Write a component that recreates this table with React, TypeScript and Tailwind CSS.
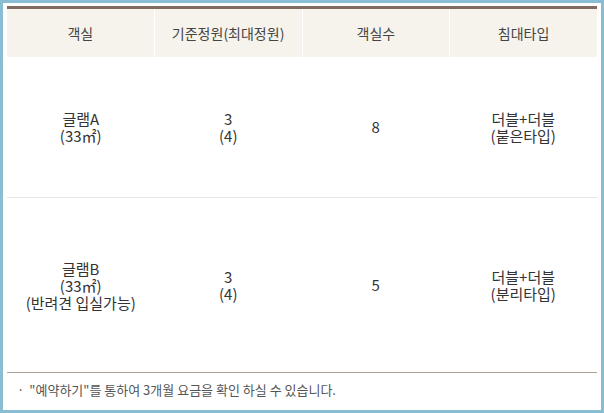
const rows = [
  { room: ['글램A', '(33㎡)'], people: ['3', '(4)'], count: '8', bed: ['더블+더블', '(붙은타입)'], h: 'h-[141px] border-b border-[#e6e6e6]' },
  { room: ['글램B', '(33㎡)', '(반려견 입실가능)'], people: ['3', '(4)'], count: '5', bed: ['더블+더블', '(분리타입)'], h: 'h-[174px]' },
];

const heads = ['객실', '기준정원(최대정원)', '객실수', '침대타입'];

const Lines = ({ items }: { items: string[] }) => (
  <div className="flex flex-col items-center">
    {items.map((t) => (
      <span key={t} className="leading-[17px]">
        {t}
      </span>
    ))}
  </div>
);

const App = () => {
  return (
    <div className="w-[604px] h-[413px] bg-[#89bdd3] p-[3px] font-['Noto_Sans_CJK_KR','Noto_Sans',sans-serif]">
      <div className="h-full bg-white pt-[3px] px-[4px] flex flex-col">
        <div className="border-t-[3px] border-[#7f6b5f]">
          <div className="grid grid-cols-4 gap-x-px h-[48px] bg-white">
            {heads.map((h) => (
              <div key={h} className="bg-[#f6f3ec] flex items-center justify-center text-[14px] text-[#444]">
                {h}
              </div>
            ))}
          </div>
          {rows.map((r) => (
            <div key={r.count} className={`grid grid-cols-4 items-center text-[15px] text-[#333] ${r.h}`}>
              <Lines items={r.room} />
              <Lines items={r.people} />
              <div className="text-center">{r.count}</div>
              <Lines items={r.bed} />
            </div>
          ))}
        </div>
        <div className="border-t border-[#aaa19b] flex items-center h-[35px] pl-[10px] text-[13px] text-[#555]">
          <span className="mr-[5px]">·</span>
          <span>"예약하기"를 통하여 3개월 요금을 확인 하실 수 있습니다.</span>
        </div>
      </div>
    </div>
  );
};

export default App;
